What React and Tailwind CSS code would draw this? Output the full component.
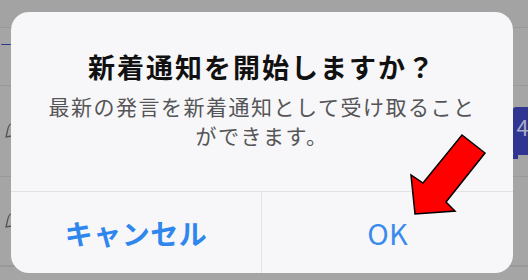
import React from "react";

const jp = { fontFamily: '"Noto Sans CJK JP", "Noto Sans", sans-serif' };

// dimmed page that sits behind the alert
const Backdrop = () => (
  <div className="flex flex-col w-full h-full bg-[#a5a5a5]">
    <div className="h-[28px] bg-[#a3a3a3] border-b border-[#989898]"></div>
    <div className="h-[58px] flex items-start border-b border-[#999999]">
      <span className="text-[12px] text-[#2b3990] leading-none mt-[11px]" style={jp}>
        ーツ
      </span>
    </div>
    <div className="h-[91px] flex items-center justify-between border-b border-[#999999]">
      <svg width="12" height="16" viewBox="0 0 12 16" className="ml-[2px]">
        <path d="M9 1 C6 2 6 6 5 10 L4 14 L10 13" fill="none" stroke="#555" strokeWidth="1.3" />
      </svg>
      <div className="relative w-[15px] h-[48px] bg-[#2f3590] rounded-l-[3px] flex items-start justify-center pt-[8px]">
        <span className="text-[22px] leading-none text-[#a9aac4] pl-[4px]" style={jp}>4</span>
        <div className="absolute -bottom-[4px] left-0 w-[5px] h-[5px] bg-[#2f3590]"></div>
      </div>
    </div>
    <div className="h-[90px] flex items-center border-b-2 border-[#999999]">
      <svg width="12" height="16" viewBox="0 0 12 16" className="ml-[2px]">
        <path d="M9 1 C6 2 6 6 5 10 L4 14 L10 13" fill="none" stroke="#555" strokeWidth="1.3" />
      </svg>
    </div>
  </div>
);

const App = () => {
  return (
    <div className="relative w-[528px] h-[280px] overflow-hidden" style={jp}>
      <Backdrop />

      {/* alert dialog */}
      <div className="absolute left-[11px] top-[12px] w-[502px] h-[261px] bg-[#f7f7f9] rounded-[18px] flex flex-col overflow-hidden">
        <div className="h-[180px] flex flex-col items-center pt-[37px] border-b border-[#e2e2e6]">
          <h2 className="text-[27px] leading-[35px] font-bold tracking-[2px] text-[#111111]">
            新着通知を開始しますか？
          </h2>
          <p className="mt-[8px] text-[21px] leading-[29px] tracking-[1.5px] text-[#555557] text-center">
            最新の発言を新着通知として受け取ること
            <br />
            ができます。
          </p>
        </div>
        <div className="flex-1 grid grid-cols-2">
          <button className="flex items-center justify-center border-r border-[#e2e2e6] text-[28px] font-bold tracking-[0.5px] text-[#2f87ee]">
            キャンセル
          </button>
          <button className="flex items-center justify-center text-[29px] text-[#3a8bec]">
            OK
          </button>
        </div>
      </div>

      {/* red annotation arrow */}
      <svg className="absolute inset-0" width="528" height="280" viewBox="0 0 528 280">
        <polygon
          points="462,135 485,153 446,202 455,211 415,214 411,175 423,183"
          fill="#ff0000"
          stroke="#000"
          strokeWidth="1.5"
          strokeLinejoin="miter"
        />
      </svg>
    </div>
  );
};

export default App;
